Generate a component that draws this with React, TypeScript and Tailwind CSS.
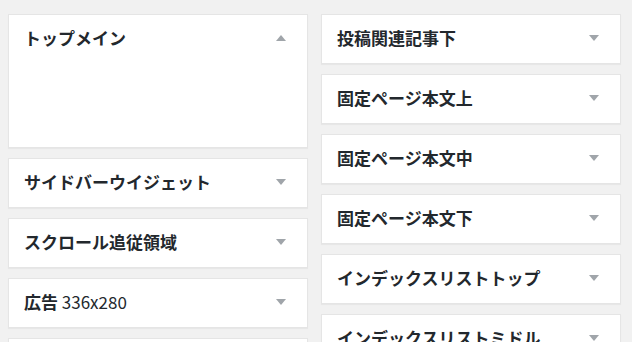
const left = ['サイドバーウイジェット', 'スクロール追従領域', '広告 336x280', '広告 300x250']
const right = [
  '投稿関連記事下',
  '固定ページ本文上',
  '固定ページ本文中',
  '固定ページ本文下',
  'インデックスリストトップ',
  'インデックスリストミドル',
]

const Arrow = ({ up = false }: { up?: boolean }) => (
  <svg width="10" height="6" viewBox="0 0 10 6" className="shrink-0">
    {up ? <polygon points="0,6 10,6 5,0" fill="#a0a5aa" /> : <polygon points="0,0 10,0 5,6" fill="#a0a5aa" />}
  </svg>
)

// 広告 336x280 : the digits show in a lighter weight
const Title = ({ title }: { title: string }) => {
  const [head, ...rest] = title.split(' ')
  return (
    <h2 className="text-[17px] font-bold leading-none text-[#23282d] whitespace-nowrap">
      {head}
      {rest.length > 0 && <span className="font-normal"> {rest.join(' ')}</span>}
    </h2>
  )
}

const Header = ({ title, up }: { title: string; up?: boolean }) => (
  <div className="flex h-[45px] items-center justify-between pl-[15px] pr-[21px]">
    <Title title={title} />
    <Arrow up={up} />
  </div>
)

const Box = ({ title }: { title: string }) => (
  <div className="h-[50px] shrink-0 overflow-hidden border border-[#e5e5e5] bg-white shadow-[0_1px_1px_rgba(0,0,0,0.04)]">
    <Header title={title} />
  </div>
)

export default function App() {
  return (
    <div
      className="flex h-[342px] w-[632px] gap-[13px] overflow-hidden bg-[#f1f1f1] pl-[8px] pt-[14px]"
      style={{ fontFamily: '"Noto Sans CJK JP", "Noto Sans", sans-serif' }}
    >
      <div className="flex w-[300px] shrink-0 flex-col gap-[10px]">
        <div className="h-[134px] shrink-0 border border-[#e5e5e5] bg-white shadow-[0_1px_1px_rgba(0,0,0,0.04)]">
          <Header title="トップメイン" up />
        </div>
        {left.map((t) => (
          <Box key={t} title={t} />
        ))}
      </div>
      <div className="flex w-[300px] shrink-0 flex-col gap-[10px]">
        {right.map((t) => (
          <Box key={t} title={t} />
        ))}
      </div>
    </div>
  )
}
